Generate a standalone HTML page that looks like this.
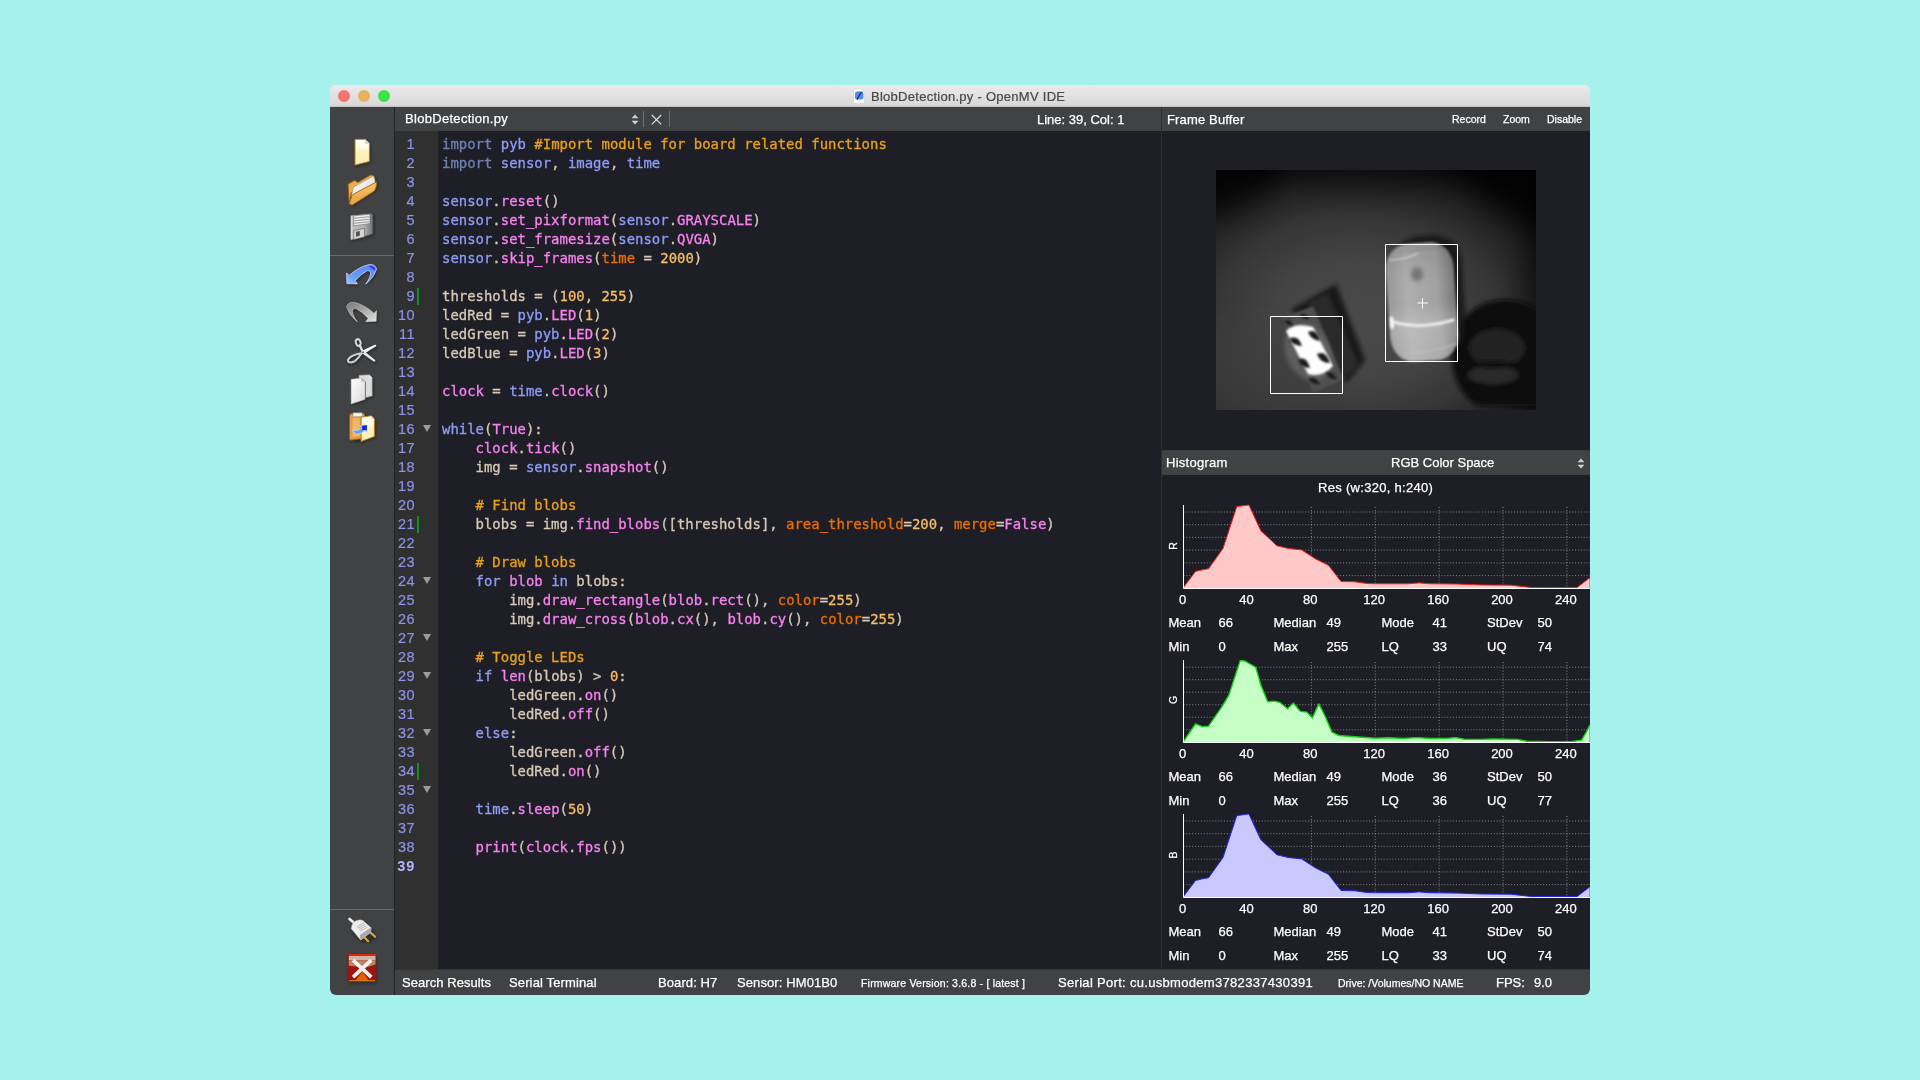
<!DOCTYPE html>
<html lang="en">
<head>
<meta charset="utf-8">
<title>BlobDetection.py - OpenMV IDE</title>
<style>
*{box-sizing:border-box;margin:0;padding:0}
html,body{width:1920px;height:1080px;overflow:hidden}
body{background:#a5f1ed;font-family:"Liberation Sans",sans-serif;position:relative}
#win{position:absolute;left:330px;top:85px;width:1260px;height:910px;border-radius:5px 5px 6px 6px;overflow:hidden;background:transparent;will-change:transform}
.abs{position:absolute}
#titlebar{left:0;top:0;width:1260px;height:22px;background:linear-gradient(#eaeaea,#e2e2e2 45%,#d7d7d7);border-bottom:1px solid #c2c2c2}
#titlebar .t{position:absolute;left:541px;top:1px;height:22px;line-height:22px;font-size:13px;color:#484848;white-space:nowrap;letter-spacing:.27px;-webkit-text-stroke:.2px #484848}
.tl{position:absolute;top:5px;width:12px;height:12px;border-radius:50%}
#sidebar{left:0;top:22px;width:64px;height:888px;background:#404244}
#sideline{left:64px;top:22px;width:1px;height:888px;background:#222324}
.sep{position:absolute;left:0;width:64px;height:1px;background:#606264}
#tabbar{left:65px;top:22px;width:766px;height:24px;background:#404244}
#gutter{left:65px;top:46px;width:43px;height:839px;background:#303030}
#editor{left:108px;top:46px;width:723px;height:839px;background:#1e1e27}
#vsplit{left:831px;top:22px;width:1px;height:863px;background:#2f2f30}
#fbhead{left:832px;top:22px;width:428px;height:24px;background:#404244}
#fbarea{left:832px;top:46px;width:428px;height:319px;background:#1e1e27}
#hhead{left:832px;top:365px;width:428px;height:25px;background:#404244;border-top:1px dotted #34353a}
#hhead .f13{top:-1px}
#harea{left:832px;top:390px;width:428px;height:495px;background:#1e1e27}
#status{left:65px;top:884px;width:1195px;height:26px;background:#404244;border-top:1px solid #34353a}
.w{color:#fff;white-space:nowrap;position:absolute;-webkit-text-stroke:.25px #fff}

#editor{font-family:"DejaVu Sans Mono","Liberation Mono",monospace;font-size:13.94px;color:#d9cab5;padding:4px 0 0 4px}
.ln{height:19px;line-height:19px;white-space:pre}
.ln i{font-style:normal}
#editor,.ln i{-webkit-text-stroke:.3px currentColor}
.k{color:#7182b4}.m{color:#8f9df7}.c{color:#eaa11b}.f{color:#f882f0}.a{color:#ee6e02}.n{color:#f6be66}
#gutter{padding-top:4px;font-size:14.5px;letter-spacing:.45px;color:#8c93e8;-webkit-text-stroke:.2px #8c93e8}
.gn{height:19px;line-height:19px;position:relative}
.gn span{position:absolute;right:23px;top:0}
.gn.cur{font-weight:bold;color:#b2b6ff;-webkit-text-stroke:0;letter-spacing:.8px}
.fold{position:absolute;left:28px;top:5px;width:0;height:0;border-left:4.7px solid transparent;border-right:4.7px solid transparent;border-top:7.6px solid #9c9c9c}
.mark{position:absolute;left:22px;top:1px;width:2px;height:17px;background:#12901a}

.f13{font-size:13px;top:0;height:24px;line-height:24px}
.f11{font-size:10.5px;top:0;height:24px;line-height:25px}
.f10{font-size:10.5px;top:0;height:25px;line-height:27px}
#status .f13{height:25px;line-height:25px;padding-top:0}

#t_file{letter-spacing:.3px;padding-top:0}#t_fb{letter-spacing:.15px}#t_hist{letter-spacing:.27px;margin-left:-1px}
#s_search{letter-spacing:.06px}#s_serial{letter-spacing:.13px}#s_board{letter-spacing:.1px}#s_sensor{letter-spacing:.1px}
#s_fw{letter-spacing:.2px}#s_port{letter-spacing:.31px}

.h13{font-size:13px;height:18px;line-height:18px}
.ax{width:40px;text-align:center}
.rot{font-size:10.5px;width:18px;height:12px;line-height:12px;text-align:center;transform:rotate(-90deg)}
#h_res{letter-spacing:.3px}
.f13{padding-top:1px}
</style>
</head>
<body>
<div id="win">
  <div id="titlebar" class="abs">
    <span class="tl" style="left:8px;background:#f4756f"></span>
    <span class="tl" style="left:28px;background:#e8b35f"></span>
    <span class="tl" style="left:48px;background:#3ae449"></span>
    <svg class="abs" style="left:522px;top:3px" width="14" height="16" viewBox="0 0 14 16">
      <path d="M1.700 .9 H9 L12.400 4.300 V15.200 H1.700 Z" fill="#fff" stroke="#c9c9c9" stroke-width=".5"/>
      <rect x="3" y="3.600" width="8.400" height="8" rx="1.800" fill="#4f8df5"/>
      <path d="M9.300 4.200 L5.200 11" stroke="#2c2c3c" stroke-width="1.300" stroke-linecap="round"/>
    </svg>
    <span class="t">BlobDetection.py - OpenMV IDE</span>
  </div>
  <div id="sidebar" class="abs">
<svg class="abs" style="left:0;top:0" width="64" height="888" viewBox="330 107 64 888">
<defs>
<linearGradient id="gPage" x1="0" y1="0" x2="0" y2="1"><stop offset="0" stop-color="#ffffff"/><stop offset=".3" stop-color="#fffbe6"/><stop offset=".45" stop-color="#fdf2bd"/><stop offset="1" stop-color="#fbeeb4"/></linearGradient>
<linearGradient id="gWhite" x1="0" y1="0" x2="1" y2="1"><stop offset="0" stop-color="#ffffff"/><stop offset="1" stop-color="#d9d9d9"/></linearGradient>
<linearGradient id="gGray" x1="0" y1="0" x2="1" y2="0"><stop offset="0" stop-color="#f0f0f0"/><stop offset=".12" stop-color="#bdbdbd"/><stop offset=".6" stop-color="#b2b2b2"/><stop offset="1" stop-color="#6f6f6f"/></linearGradient>
<linearGradient id="gFold" x1="0" y1="0" x2="0" y2="1"><stop offset="0" stop-color="#f8c468"/><stop offset="1" stop-color="#e9a443"/></linearGradient>
<linearGradient id="gUndo" x1="0" y1="1" x2="1" y2="0"><stop offset="0" stop-color="#a3c0ff"/><stop offset=".35" stop-color="#5f9bff"/><stop offset=".8" stop-color="#5a8cff"/><stop offset="1" stop-color="#3a4cf0"/></linearGradient>
<linearGradient id="gRedo" x1="1" y1="1" x2="0" y2="0"><stop offset="0" stop-color="#e6e6e6"/><stop offset=".5" stop-color="#a9a9a9"/><stop offset="1" stop-color="#777"/></linearGradient>
<filter id="ish" x="-30%" y="-30%" width="170%" height="170%"><feGaussianBlur stdDeviation="0.9"/></filter>
</defs>
<path d="M330 255.500 H394 M330 909.500 H394" stroke="#66686a" stroke-width="1"/>
<path d="M354.7 139.1 L365.2 139.1 L369.7 143.3 L369.7 161.7 L354.7 165.6 Z" fill="#1c1c1c" opacity=".55" filter="url(#ish)" transform="translate(1.2 1.4)"/>
<path d="M355.0 139.3 L365.2 139.3 L369.4 143.3 L369.4 161.4 L355.0 165.1 Z" fill="url(#gPage)" stroke="#b97d22" stroke-width="1"/>
<path d="M365.2 139.3 L365.2 143.3 L369.4 143.3 Z" fill="#d4d4d4" stroke="#c9c0a8" stroke-width=".5"/>
<path d="M347.8 183.9 L354.7 180.2 L357.8 182.2 L370.8 174.7 L374.1 175.6 L376.9 181.7 L375.8 188.9 L351.9 205.3 L349.1 203.9 Z" fill="#1c1c1c" opacity=".55" filter="url(#ish)" transform="translate(1 1.5)"/>
<path d="M348.0 184.1 L354.7 180.4 L357.8 182.4 L370.8 174.9 L373.9 175.8 L375.0 180.2 L351.3 192.8 L349.3 203.7 Z" fill="#ecaa48" stroke="#9a621a" stroke-width="1" stroke-linejoin="round"/>
<path d="M351.1 196.7 L353.8 186.9 L373.3 176.2 L374.7 179.4 L375.3 183.3 L353.0 198.0 Z" fill="url(#gWhite)" stroke="#9a9a9a" stroke-width=".5"/>
<path d="M349.3 203.7 L352.2 195.0 L357.1 192.2 L376.7 181.9 L376.1 186.9 L374.4 190.9 L352.1 205.1 Z" fill="url(#gFold)" stroke="#a86c1c" stroke-width="1" stroke-linejoin="round"/>
<path d="M359.7 198.0 L369.7 193.3" stroke="#c98d2e" stroke-width="1" stroke-dasharray="1 1.6" fill="none"/>
<path d="M350.0 215.0 L371.3 212.8 L373.3 214.4 L373.3 234.4 L351.3 240.6 L350.0 239.4 Z" fill="#1c1c1c" opacity=".55" filter="url(#ish)" transform="translate(1.2 1.4)"/>
<path d="M350.2 215.2 L371.1 213.1 L373.1 214.7 L373.1 234.2 L351.6 240.2 L350.2 239.2 Z" fill="url(#gGray)" stroke="#3c3c3c" stroke-width=".9" stroke-linejoin="round"/>
<path d="M353.6 215.8 L370.0 214.2 L370.0 223.6 L353.6 225.8 Z" fill="#ececec" stroke="#6e6e6e" stroke-width=".6"/>
<path d="M354.1 218.3 L369.6 216.7 M354.1 220.9 L369.6 219.2 M354.1 223.3 L369.6 221.7" stroke="#8f8f8f" stroke-width=".9" fill="none"/>
<path d="M353.8 230.6 L364.4 228.3 L364.4 236.9 L353.8 239.6 Z" fill="#d6d6d6" stroke="#555" stroke-width=".6"/>
<path d="M356.0 231.8 L359.8 230.9 L359.8 235.8 L356.0 236.7 Z" fill="#505050"/>
<path d="M346.6 272.9 L346.9 283.6 L357.6 283.9 L355.0 280.7 Q360.8 274.1 367.2 270.7 Q370.9 270.3 370.6 273.9 Q370.2 277.8 365.7 284.2 Q374.1 277.2 376.6 269.4 Q375.6 263.9 369.1 264.6 Q359.1 266.7 349.1 275.4 Z" fill="#1c1c1c" opacity=".6" filter="url(#ish)" transform="translate(1 1.5)"/>
<path d="M346.6 272.9 L346.9 283.6 L357.6 283.9 L355.0 280.7 Q360.8 274.1 367.2 270.7 Q370.9 270.3 370.6 273.9 Q370.2 277.8 365.7 284.2 Q374.1 277.2 376.6 269.4 Q375.6 263.9 369.1 264.6 Q359.1 266.7 349.1 275.4 Z" fill="url(#gUndo)" stroke="#cfd2ff" stroke-width=".8" stroke-linejoin="round"/>
<path d="M368.6 266.1 Q374.1 265.9 375.3 270.6 Q371.9 268.1 368.6 266.1 Z" fill="#1a1ae6" opacity=".85"/>
<path d="M376.6 310.7 L376.2 321.3 L365.6 321.7 L368.1 318.4 Q362.3 311.9 355.9 308.4 Q352.2 308.1 352.6 311.7 Q352.9 315.6 357.4 322.0 Q349.0 315.0 346.6 307.2 Q347.6 301.7 354.0 302.3 Q364.0 304.4 374.0 313.2 Z" fill="#1c1c1c" opacity=".6" filter="url(#ish)" transform="translate(1 1.5)"/>
<path d="M376.6 310.7 L376.2 321.3 L365.6 321.7 L368.1 318.4 Q362.3 311.9 355.9 308.4 Q352.2 308.1 352.6 311.7 Q352.9 315.6 357.4 322.0 Q349.0 315.0 346.6 307.2 Q347.6 301.7 354.0 302.3 Q364.0 304.4 374.0 313.2 Z" fill="url(#gRedo)" stroke="#e9e9e9" stroke-width=".4" stroke-linejoin="round"/>
<g filter="url(#ish)" opacity=".65" transform="translate(.9 1.3)" fill="#151515" stroke="#151515"><path d="M362 350.800 L375.400 344.400 L376.500 346.100 L364.200 353.700 Z" stroke="none" fill="#151515"/><path d="M361.600 353 L364.100 350.900 L375.500 360.300 L374.300 362 Z" stroke="none" fill="#151515"/><path d="M363 352.300 L359.800 345.600" fill="none" stroke="#151515" stroke-width="2.400" stroke-linecap="round"/><ellipse cx="358.200" cy="342.500" rx="2.300" ry="3.400" transform="rotate(-18 358.200 342.500)" fill="none" stroke="#151515" stroke-width="2"/><path d="M361.600 353.300 C356.500 353.800 349.500 356.300 348 360 C347.500 363 352 363 355.200 360.900 C358.100 358.700 359.900 356 361.600 353.300 Z" fill="none" stroke="#151515" stroke-width="2" stroke-linejoin="round"/></g>
<path d="M362 350.800 L375.400 344.400 L376.500 346.100 L364.200 353.700 Z" stroke="none" fill="#f2f2f2"/><path d="M361.600 353 L364.100 350.900 L375.500 360.300 L374.300 362 Z" stroke="none" fill="#e6e6e6"/><path d="M363 352.300 L359.800 345.600" fill="none" stroke="#dedede" stroke-width="2.400" stroke-linecap="round"/><ellipse cx="358.200" cy="342.500" rx="2.300" ry="3.400" transform="rotate(-18 358.200 342.500)" fill="none" stroke="#d8d8d8" stroke-width="2"/><path d="M361.600 353.300 C356.500 353.800 349.500 356.300 348 360 C347.500 363 352 363 355.200 360.900 C358.100 358.700 359.900 356 361.600 353.300 Z" fill="none" stroke="#cfcfcf" stroke-width="2" stroke-linejoin="round"/>
<circle cx="363.100" cy="352.300" r=".800" fill="#222"/>
<path d="M358.8 375.0 L369.2 374.6 L372.3 377.5 L372.3 396.2 L365.1 398.3 L365.1 399.6 L350.9 404.2 L350.9 379.2 L358.8 378.2 Z" fill="#1c1c1c" opacity=".55" filter="url(#ish)" transform="translate(1.2 1.4)"/>
<path d="M359.0 375.2 L369.2 374.8 L372.2 377.7 L372.2 396.1 L359.0 399.2 Z" fill="#dcdcdc" stroke="#8c8c8c" stroke-width=".6"/>
<path d="M369.2 374.8 L369.2 377.7 L372.2 377.7 Z" fill="#f6f6f6"/>
<path d="M365.5 381.7 L365.5 399.0" stroke="#555" stroke-width="1" fill="none" opacity=".8"/>
<path d="M351.1 379.3 L361.8 378.1 L364.9 381.2 L364.9 399.4 L351.1 403.9 Z" fill="url(#gWhite)" stroke="#b5b5b5" stroke-width=".5"/>
<path d="M361.8 378.1 L361.8 381.2 L364.9 381.2 Z" fill="#bdbdbd" stroke="#999" stroke-width=".4"/>
<path d="M349.2 415.0 L350.5 413.3 L364.2 413.3 L371.3 415.4 L374.7 418.8 L374.7 436.7 L360.9 441.7 L350.5 440.4 L349.2 439.2 Z" fill="#1c1c1c" opacity=".55" filter="url(#ish)" transform="translate(1.2 1.4)"/>
<path d="M349.5 415.2 L350.7 413.7 L364.1 413.7 L364.5 415.2 L364.5 438.2 L350.7 440.2 L349.5 439.0 Z" fill="#e59f42" stroke="#9c5d12" stroke-width="1" stroke-linejoin="round"/>
<path d="M352.6 418.3 L359.7 418.3 L359.7 435.8 L352.6 437.1 Z" fill="#f2c27a" opacity=".7"/>
<path d="M353.0 412.8 L362.2 412.8 L362.2 416.5 L353.0 416.8 Z" fill="#f4f4f4" stroke="#8d8d8d" stroke-width=".5"/>
<path d="M361.1 417.2 L371.2 415.7 L374.4 418.9 L374.4 436.5 L361.1 441.4 Z" fill="url(#gPage)" stroke="#b97d22" stroke-width="1" stroke-linejoin="round"/>
<path d="M371.2 415.7 L371.2 418.9 L374.4 418.9 Z" fill="#d8d8d8"/>
<path d="M352.0 430.0 Q357.2 431.7 361.8 428.3 L359.8 425.8 L367.2 424.8 L367.2 432.5 L364.8 430.4 Q359.7 435.8 354.7 433.3 Z" fill="#5aa2ff" stroke="#e8f0ff" stroke-width=".5"/>
<path d="M362.2 425.7 L366.8 425.2 L366.8 430.0 L362.2 430.0 Z" fill="#1c1ce0"/>
<path d="M351.3 925.0 L354.7 920.8 L362.2 919.6 L371.3 927.5 L375.5 936.7 L368.4 941.7 L360.5 940.4 L351.3 931.7 Z" fill="#1c1c1c" opacity=".55" filter="url(#ish)" transform="translate(1.2 1.6)"/>
<path d="M349.5 919.0 L353.4 922.3" stroke="#f1f1f1" stroke-width="2.6" stroke-linecap="round" fill="none"/>
<path d="M370.1 932.1 L375.1 936.7 M363.7 936.7 L368.2 941.2" stroke="#e2a13c" stroke-width="2.2" stroke-linecap="round" fill="none"/>
<path d="M351.2 928.8 Q351.3 923.3 355.9 920.7 Q360.5 918.8 363.0 920.4 L371.5 927.9 L370.1 932.9 L360.7 940.2 Z" fill="#ececec" stroke="#9d9d9d" stroke-width=".4" stroke-linejoin="round"/>
<path d="M360.7 940.2 L370.1 932.9 L371.5 927.9 L370.9 927.5 L359.8 935.0 Z" fill="#a9a9a9"/>
<path d="M356.8 926.7 L363.8 922.9 M357.8 928.2 L365.1 924.3 M359.0 929.6 L366.3 925.8 M360.1 931.0 L367.3 927.3" stroke="#a2a2a2" stroke-width=".7" fill="none"/>
<rect x="347.8" y="954" width="28.6" height="28.2" rx="1.5" fill="#1c1c1c" opacity=".5" filter="url(#ish)" transform="translate(.6 1.2)"/>
<rect x="347.8" y="954" width="28.4" height="27.8" rx="1.5" fill="#9d1310"/>
<path d="M348.8 955.7 L375.5 955.7 L375.5 960.2 L348.8 960.2 Z" fill="#cdb3a8"/>
<path d="M348.8 960.2 L375.5 960.2 L375.5 964.6 L368.0 966.7 L358.0 966.7 L348.8 965.8 Z" fill="#b98462"/>
<path d="M355.1 981.0 L362.2 971.7 L369.2 981.0 Z" fill="#e56207"/>
<path d="M348.3 954.7 L375.9 954.7" stroke="#e2240f" stroke-width="1.2" fill="none"/>
<path d="M349.2 980.7 L375.1 980.7" stroke="#d8860a" stroke-width="1" fill="none"/>
<path d="M353.0 960.2 L371.3 977.1 M371.3 960.2 L353.0 977.1" stroke="#f0f0f0" stroke-width="3.8" stroke-linecap="butt" fill="none"/>
</svg>
</div>
  <div id="sideline" class="abs"></div>
  <div id="tabbar" class="abs">
    <span class="w f13" id="t_file" style="left:10px">BlobDetection.py</span>
    <svg class="abs" style="left:235px;top:6px;overflow:visible" width="44" height="16" viewBox="0 0 44 16">
      <path d="M1.6 5.2 L5 1.6 L8.4 5.2 Z M1.6 7.8 L5 11.4 L8.4 7.8 Z" fill="#d0d0d0"/>
      <path d="M13.5 -2 V14 M39.5 -2 V14" stroke="#6e6f71" stroke-width="1"/>
      <path d="M21.8 2 L31.2 11.4 M31.2 2 L21.8 11.4" stroke="#e4e4e4" stroke-width="1.1" fill="none"/>
    </svg>
    <span class="w f13" id="t_line" style="left:642px">Line: 39, Col: 1</span>
  </div>
  <div id="gutter" class="abs">
<div class="gn"><span>1</span></div>
<div class="gn"><span>2</span></div>
<div class="gn"><span>3</span></div>
<div class="gn"><span>4</span></div>
<div class="gn"><span>5</span></div>
<div class="gn"><span>6</span></div>
<div class="gn"><span>7</span></div>
<div class="gn"><span>8</span></div>
<div class="gn"><span>9</span><b class="mark"></b></div>
<div class="gn"><span>10</span></div>
<div class="gn"><span>11</span></div>
<div class="gn"><span>12</span></div>
<div class="gn"><span>13</span></div>
<div class="gn"><span>14</span></div>
<div class="gn"><span>15</span></div>
<div class="gn"><span>16</span><b class="fold"></b></div>
<div class="gn"><span>17</span></div>
<div class="gn"><span>18</span></div>
<div class="gn"><span>19</span></div>
<div class="gn"><span>20</span></div>
<div class="gn"><span>21</span><b class="mark"></b></div>
<div class="gn"><span>22</span></div>
<div class="gn"><span>23</span></div>
<div class="gn"><span>24</span><b class="fold"></b></div>
<div class="gn"><span>25</span></div>
<div class="gn"><span>26</span></div>
<div class="gn"><span>27</span><b class="fold"></b></div>
<div class="gn"><span>28</span></div>
<div class="gn"><span>29</span><b class="fold"></b></div>
<div class="gn"><span>30</span></div>
<div class="gn"><span>31</span></div>
<div class="gn"><span>32</span><b class="fold"></b></div>
<div class="gn"><span>33</span></div>
<div class="gn"><span>34</span><b class="mark"></b></div>
<div class="gn"><span>35</span><b class="fold"></b></div>
<div class="gn"><span>36</span></div>
<div class="gn"><span>37</span></div>
<div class="gn"><span>38</span></div>
<div class="gn cur"><span>39</span></div>
</div>
  <div id="editor" class="abs">
<div class="ln"><i class="k">import</i> <i class="m">pyb</i> <i class="c">#Import module for board related functions</i></div>
<div class="ln"><i class="k">import</i> <i class="m">sensor</i>, <i class="m">image</i>, <i class="m">time</i></div>
<div class="ln"></div>
<div class="ln"><i class="m">sensor</i>.<i class="f">reset</i>()</div>
<div class="ln"><i class="m">sensor</i>.<i class="f">set_pixformat</i>(<i class="m">sensor</i>.<i class="f">GRAYSCALE</i>)</div>
<div class="ln"><i class="m">sensor</i>.<i class="f">set_framesize</i>(<i class="m">sensor</i>.<i class="f">QVGA</i>)</div>
<div class="ln"><i class="m">sensor</i>.<i class="f">skip_frames</i>(<i class="a">time</i> = <i class="n">2000</i>)</div>
<div class="ln"></div>
<div class="ln">thresholds = (<i class="n">100</i>, <i class="n">255</i>)</div>
<div class="ln">ledRed = <i class="m">pyb</i>.<i class="f">LED</i>(<i class="n">1</i>)</div>
<div class="ln">ledGreen = <i class="m">pyb</i>.<i class="f">LED</i>(<i class="n">2</i>)</div>
<div class="ln">ledBlue = <i class="m">pyb</i>.<i class="f">LED</i>(<i class="n">3</i>)</div>
<div class="ln"></div>
<div class="ln"><i class="f">clock</i> = <i class="m">time</i>.<i class="f">clock</i>()</div>
<div class="ln"></div>
<div class="ln"><i class="m">while</i>(<i class="f">True</i>):</div>
<div class="ln">    <i class="f">clock</i>.<i class="f">tick</i>()</div>
<div class="ln">    img = <i class="m">sensor</i>.<i class="f">snapshot</i>()</div>
<div class="ln"></div>
<div class="ln">    <i class="c"># Find blobs</i></div>
<div class="ln">    blobs = img.<i class="f">find_blobs</i>([thresholds], <i class="a">area_threshold</i>=<i class="n">200</i>, <i class="a">merge</i>=<i class="f">False</i>)</div>
<div class="ln"></div>
<div class="ln">    <i class="c"># Draw blobs</i></div>
<div class="ln">    <i class="m">for</i> <i class="f">blob</i> <i class="m">in</i> blobs:</div>
<div class="ln">        img.<i class="f">draw_rectangle</i>(<i class="f">blob</i>.<i class="f">rect</i>(), <i class="a">color</i>=<i class="n">255</i>)</div>
<div class="ln">        img.<i class="f">draw_cross</i>(<i class="f">blob</i>.<i class="f">cx</i>(), <i class="f">blob</i>.<i class="f">cy</i>(), <i class="a">color</i>=<i class="n">255</i>)</div>
<div class="ln"></div>
<div class="ln">    <i class="c"># Toggle LEDs</i></div>
<div class="ln">    <i class="m">if</i> <i class="f">len</i>(blobs) &gt; <i class="n">0</i>:</div>
<div class="ln">        ledGreen.<i class="f">on</i>()</div>
<div class="ln">        ledRed.<i class="f">off</i>()</div>
<div class="ln">    <i class="m">else</i>:</div>
<div class="ln">        ledGreen.<i class="f">off</i>()</div>
<div class="ln">        ledRed.<i class="f">on</i>()</div>
<div class="ln"></div>
<div class="ln">    <i class="m">time</i>.<i class="f">sleep</i>(<i class="n">50</i>)</div>
<div class="ln"></div>
<div class="ln">    <i class="f">print</i>(<i class="f">clock</i>.<i class="f">fps</i>())</div>
<div class="ln"></div>
</div>
  <div id="vsplit" class="abs"></div>
  <div id="fbhead" class="abs">
    <span class="w f13" id="t_fb" style="left:5px">Frame Buffer</span>
    <span class="w f11" id="t_rec" style="left:290px">Record</span>
    <span class="w f11" id="t_zoom" style="left:341px">Zoom</span>
    <span class="w f11" id="t_dis" style="left:385px">Disable</span>
  </div>
  <div id="fbarea" class="abs">
<svg class="abs" style="left:54px;top:39px" width="320" height="240" viewBox="0 0 320 240">
  <defs>
    <radialGradient id="bgG" gradientUnits="userSpaceOnUse" cx="0" cy="0" r="1" gradientTransform="translate(140 150) scale(240 172)">
      <stop offset="0" stop-color="#4a4a4a"/>
      <stop offset="0.35" stop-color="#444444"/>
      <stop offset="0.6" stop-color="#363636"/>
      <stop offset="0.8" stop-color="#222222"/>
      <stop offset="0.95" stop-color="#0e0e0e"/>
      <stop offset="1" stop-color="#090909"/>
    </radialGradient>
    <linearGradient id="mouseG" x1="0" y1="0" x2="1" y2="0">
      <stop offset="0" stop-color="#989898"/>
      <stop offset="0.3" stop-color="#aeaeae"/>
      <stop offset="0.75" stop-color="#a0a0a0"/>
      <stop offset="1" stop-color="#767676"/>
    </linearGradient>
    <linearGradient id="mouseV" x1="0" y1="0" x2="0" y2="1">
      <stop offset="0" stop-color="#000" stop-opacity=".12"/>
      <stop offset="0.5" stop-color="#fff" stop-opacity="0"/>
      <stop offset="0.7" stop-color="#fff" stop-opacity=".18"/>
      <stop offset="1" stop-color="#fff" stop-opacity=".1"/>
    </linearGradient>
    <filter id="b1" filterUnits="userSpaceOnUse" x="-60" y="-60" width="440" height="360"><feGaussianBlur stdDeviation="0.9"/></filter>
    <filter id="b2" filterUnits="userSpaceOnUse" x="-60" y="-60" width="440" height="360"><feGaussianBlur stdDeviation="2.2"/></filter>
    <filter id="b4" filterUnits="userSpaceOnUse" x="-200" y="-200" width="720" height="640"><feGaussianBlur stdDeviation="14"/></filter>
    <clipPath id="fbclip"><rect width="320" height="240"/></clipPath>
  </defs>
  <g clip-path="url(#fbclip)">
    <rect width="320" height="240" fill="url(#bgG)"/>
    <g filter="url(#b4)" fill="#060606">
      <ellipse cx="-10" cy="-10" rx="75" ry="55" opacity=".6"/>
      <ellipse cx="330" cy="-10" rx="80" ry="62" opacity=".62"/>
      <ellipse cx="160" cy="-32" rx="170" ry="50" opacity=".4"/>
      <ellipse cx="340" cy="120" rx="32" ry="130" opacity=".5"/>
    </g>
    <ellipse cx="10" cy="215" rx="90" ry="60" fill="#404040" opacity=".6" filter="url(#b4)"/>
    <!-- lens cap ring -->
    <g filter="url(#b2)">
      <path d="M236 178 C238 150 262 128 292 130 C312 131 326 140 330 150 L330 236 L262 236 C244 226 234 204 236 178 Z" fill="#0e0e0e"/>
      <ellipse cx="281" cy="178" rx="28" ry="19" fill="#232323"/>
      <ellipse cx="277" cy="205" rx="25" ry="9" fill="#2b2b2b"/>
      <ellipse cx="278" cy="195" rx="27" ry="3.500" fill="#0b0b0b"/>
    </g>
    <!-- mouse shadow -->
    <rect x="180" y="66" width="68" height="120" rx="26" fill="#151515" opacity=".85" transform="rotate(-4 210 130)" filter="url(#b2)"/>
    <!-- mouse body -->
    <g transform="rotate(-4 206 132)">
      <rect x="172" y="73" width="68" height="118" rx="22" ry="26" fill="url(#mouseG)" filter="url(#b1)"/>
      <rect x="172" y="73" width="68" height="118" rx="22" ry="26" fill="url(#mouseV)" filter="url(#b1)"/>
      <ellipse cx="203" cy="104" rx="6" ry="7" fill="#757575" filter="url(#b2)"/>
      <path d="M176 150 Q205 160 236 152" stroke="#f4f4f4" stroke-width="2.6" fill="none" stroke-linecap="round" filter="url(#b1)"/>
      <path d="M174.500 146 v9" stroke="#fff" stroke-width="3.5" stroke-linecap="round" filter="url(#b1)"/>
      <path d="M185 182 Q210 184 238 176" stroke="#c4c4c4" stroke-width="1.2" fill="none" filter="url(#b1)"/>
      <path d="M176 88 Q195 88 206 83" stroke="#c8c8c8" stroke-width="1.4" fill="none" filter="url(#b1)"/>
    </g>
    <!-- lego shadow + body -->
    <path d="M76 139 L120 114 L149 190 L130 213 Z" fill="#161616" opacity=".92" filter="url(#b2)"/>
    <path d="M92 132 L112 124 L143 196 L126 210 Z" fill="#2a2a2a" filter="url(#b2)"/>
    <path d="M66 148 L97 136 L128 209 L97 223 Z" fill="#505050" filter="url(#b1)"/>
    <ellipse cx="92" cy="182" rx="22" ry="30" transform="rotate(-25 92 182)" fill="#6a6a6a" opacity=".7" filter="url(#b2)"/>
    <path d="M70 161 Q79 152 97 157 L117 196 Q106 208 92 204 Z" fill="#fdfdfd" filter="url(#b1)"/>
    <g fill="#1f1f1f" filter="url(#b1)">
      <path d="M73 169 q9 -5 13 7 q-9 0 -13 -7z"/>
      <path d="M92 162 q9 -4 12 9 q-9 -1 -12 -9z"/>
      <path d="M82 190 q8 -5 12 8 q-9 0 -12 -8z"/>
      <path d="M101 184 q9 -4 13 9 q-10 0 -13 -9z"/>
      <path d="M92 209 q7 -4 12 5 q-8 1 -12 -5z"/>
      <path d="M110 203 q7 -3 11 6 q-8 1 -11 -6z"/>
      <path d="M68 151 q6 -3 9 4 q-6 1 -9 -4z"/>
      <path d="M84 145 q6 -3 9 4 q-6 1 -9 -4z"/>
    </g>
    <!-- annotations -->
    <path d="M169.500 74.500 H241.500 V191.500 H169.500 Z M54.500 146.500 H126.500 V223.500 H54.500 Z" fill="none" stroke="#fff" stroke-width="1"/>
    <path d="M201.500 133 H212 M206.500 128 V138.500" stroke="#fff" stroke-width="1" fill="none"/>
  </g>
</svg>
</div>
  <div id="hhead" class="abs">
    <span class="w f13" id="t_hist" style="left:5px">Histogram</span>
    <span class="w f13" id="t_rgb" style="left:229px">RGB Color Space</span>
    <svg class="abs" style="left:414px;top:6px" width="10" height="13" viewBox="0 0 10 13">
      <path d="M1.6 5.2 L5 1.6 L8.4 5.2 Z M1.6 7.8 L5 11.4 L8.4 7.8 Z" fill="#d0d0d0"/>
    </svg>
  </div>
  <div id="harea" class="abs">
<svg class="abs" style="left:0;top:0" width="428" height="494" viewBox="0 0 428 494">
<path d="M21.5 100.6 H428 M21.5 87.9 H428 M21.5 75.1 H428 M21.5 62.4 H428 M21.5 49.7 H428 M21.5 37.0 H428 M85.4 32.0 V113.3 M149.3 32.0 V113.3 M213.2 32.0 V113.3 M277.1 32.0 V113.3 M341.0 32.0 V113.3 M404.9 32.0 V113.3" stroke="#d0d0d0" stroke-width="0.7" stroke-dasharray="1 1.9" opacity="0.85" fill="none"/>
<path d="M20.9 113.3 L20.9 113.2 L33.5 96.5 L39.3 95.1 L46.6 93.7 L61.0 73.5 L74.8 31.6 L86.9 30.0 L98.8 55.7 L114.9 70.8 L126.3 73.5 L139.6 74.9 L153.8 84.1 L166.4 90.3 L179.0 106.5 L192.8 106.8 L205.4 108.6 L218.0 108.8 L245.5 108.8 L257.0 107.9 L268.4 108.8 L295.9 109.1 L318.8 110.0 L348.6 110.2 L369.3 112.5 L387.6 112.7 L415.1 112.5 L427.7 102.9 L427.7 113.3 Z" fill="#ffc9c9"/>
<path d="M20.9 113.2 L33.5 96.5 L39.3 95.1 L46.6 93.7 L61.0 73.5 L74.8 31.6 L86.9 30.0 L98.8 55.7 L114.9 70.8 L126.3 73.5 L139.6 74.9 L153.8 84.1 L166.4 90.3 L179.0 106.5 L192.8 106.8 L205.4 108.6 L218.0 108.8 L245.5 108.8 L257.0 107.9 L268.4 108.8 L295.9 109.1 L318.8 110.0 L348.6 110.2 L369.3 112.5 L387.6 112.7 L415.1 112.5 L427.7 102.9" fill="none" stroke="#ff1a1a" stroke-width="1.0" stroke-linejoin="round"/>
<path d="M21.5 30.0 V113.5 H428" fill="none" stroke="#fff" stroke-width="1"/>
<path d="M21.5 254.8 H428 M21.5 242.3 H428 M21.5 229.7 H428 M21.5 217.2 H428 M21.5 204.7 H428 M21.5 192.2 H428 M85.4 187.0 V267.3 M149.3 187.0 V267.3 M213.2 187.0 V267.3 M277.1 187.0 V267.3 M341.0 187.0 V267.3 M404.9 187.0 V267.3" stroke="#d0d0d0" stroke-width="0.7" stroke-dasharray="1 1.9" opacity="0.85" fill="none"/>
<path d="M20.9 267.3 L20.9 267.4 L33.5 249.0 L40.4 251.6 L46.6 251.1 L59.9 231.9 L66.8 220.4 L78.2 185.6 L82.8 186.0 L93.8 192.4 L98.8 210.1 L105.7 226.8 L112.6 226.1 L118.3 227.7 L125.6 233.7 L131.4 228.0 L138.3 236.4 L144.7 237.1 L150.4 242.9 L156.8 228.9 L163.0 241.0 L169.9 257.1 L176.8 260.5 L192.8 261.7 L213.4 263.3 L227.2 262.8 L240.9 263.5 L254.7 262.6 L268.4 263.5 L284.5 263.5 L293.6 262.6 L302.8 264.4 L318.8 264.4 L330.3 263.9 L355.5 264.4 L364.7 266.2 L387.6 266.7 L410.5 266.5 L419.7 265.1 L424.3 257.1 L427.7 250.2 L427.7 267.3 Z" fill="#c6ffc6"/>
<path d="M20.9 267.4 L33.5 249.0 L40.4 251.6 L46.6 251.1 L59.9 231.9 L66.8 220.4 L78.2 185.6 L82.8 186.0 L93.8 192.4 L98.8 210.1 L105.7 226.8 L112.6 226.1 L118.3 227.7 L125.6 233.7 L131.4 228.0 L138.3 236.4 L144.7 237.1 L150.4 242.9 L156.8 228.9 L163.0 241.0 L169.9 257.1 L176.8 260.5 L192.8 261.7 L213.4 263.3 L227.2 262.8 L240.9 263.5 L254.7 262.6 L268.4 263.5 L284.5 263.5 L293.6 262.6 L302.8 264.4 L318.8 264.4 L330.3 263.9 L355.5 264.4 L364.7 266.2 L387.6 266.7 L410.5 266.5 L419.7 265.1 L424.3 257.1 L427.7 250.2" fill="none" stroke="#14d214" stroke-width="1.4" stroke-linejoin="round"/>
<path d="M21.5 185.0 V267.5 H428" fill="none" stroke="#fff" stroke-width="1"/>
<path d="M21.5 409.6 H428 M21.5 396.9 H428 M21.5 384.1 H428 M21.5 371.4 H428 M21.5 358.7 H428 M21.5 346.0 H428 M85.4 341.0 V422.3 M149.3 341.0 V422.3 M213.2 341.0 V422.3 M277.1 341.0 V422.3 M341.0 341.0 V422.3 M404.9 341.0 V422.3" stroke="#d0d0d0" stroke-width="0.7" stroke-dasharray="1 1.9" opacity="0.85" fill="none"/>
<path d="M20.9 422.3 L20.9 422.2 L33.5 405.5 L39.3 404.1 L46.6 402.7 L61.0 382.5 L74.8 340.6 L86.9 339.0 L98.8 364.7 L114.9 379.8 L126.3 382.5 L139.6 383.9 L153.8 393.1 L166.4 399.3 L179.0 415.5 L192.8 415.8 L205.4 417.6 L218.0 417.8 L245.5 417.8 L257.0 416.9 L268.4 417.8 L295.9 418.1 L318.8 419.0 L348.6 419.2 L369.3 421.5 L387.6 421.7 L415.1 421.5 L427.7 411.9 L427.7 422.3 Z" fill="#c9c9ff"/>
<path d="M20.9 422.2 L33.5 405.5 L39.3 404.1 L46.6 402.7 L61.0 382.5 L74.8 340.6 L86.9 339.0 L98.8 364.7 L114.9 379.8 L126.3 382.5 L139.6 383.9 L153.8 393.1 L166.4 399.3 L179.0 415.5 L192.8 415.8 L205.4 417.6 L218.0 417.8 L245.5 417.8 L257.0 416.9 L268.4 417.8 L295.9 418.1 L318.8 419.0 L348.6 419.2 L369.3 421.5 L387.6 421.7 L415.1 421.5 L427.7 411.9" fill="none" stroke="#2222ff" stroke-width="1.0" stroke-linejoin="round"/>
<path d="M21.5 339.0 V422.5 H428" fill="none" stroke="#fff" stroke-width="1"/>
</svg>
<span class="w h13" id="h_res" style="left:156px;top:4px">Res (w:320, h:240)</span>
<span class="w rot" style="left:1.5px;top:65px">R</span>
<span class="w h13 ax" style="left:0.5px;top:116px">0</span>
<span class="w h13 ax" style="left:64.4px;top:116px">40</span>
<span class="w h13 ax" style="left:128.3px;top:116px">80</span>
<span class="w h13 ax" style="left:192.2px;top:116px">120</span>
<span class="w h13 ax" style="left:256.1px;top:116px">160</span>
<span class="w h13 ax" style="left:320.0px;top:116px">200</span>
<span class="w h13 ax" style="left:383.9px;top:116px">240</span>
<span class="w h13" style="left:6.5px;top:139px">Mean</span>
<span class="w h13" style="left:56.5px;top:139px">66</span>
<span class="w h13" style="left:111.5px;top:139px">Median</span>
<span class="w h13" style="left:164.5px;top:139px">49</span>
<span class="w h13" style="left:219.5px;top:139px">Mode</span>
<span class="w h13" style="left:270.5px;top:139px">41</span>
<span class="w h13" style="left:325.0px;top:139px">StDev</span>
<span class="w h13" style="left:375.5px;top:139px">50</span>
<span class="w h13" style="left:6.5px;top:163px">Min</span>
<span class="w h13" style="left:56.5px;top:163px">0</span>
<span class="w h13" style="left:111.5px;top:163px">Max</span>
<span class="w h13" style="left:164.5px;top:163px">255</span>
<span class="w h13" style="left:219.5px;top:163px">LQ</span>
<span class="w h13" style="left:270.5px;top:163px">33</span>
<span class="w h13" style="left:325.0px;top:163px">UQ</span>
<span class="w h13" style="left:375.5px;top:163px">74</span>
<span class="w rot" style="left:1.5px;top:219px">G</span>
<span class="w h13 ax" style="left:0.5px;top:270px">0</span>
<span class="w h13 ax" style="left:64.4px;top:270px">40</span>
<span class="w h13 ax" style="left:128.3px;top:270px">80</span>
<span class="w h13 ax" style="left:192.2px;top:270px">120</span>
<span class="w h13 ax" style="left:256.1px;top:270px">160</span>
<span class="w h13 ax" style="left:320.0px;top:270px">200</span>
<span class="w h13 ax" style="left:383.9px;top:270px">240</span>
<span class="w h13" style="left:6.5px;top:293px">Mean</span>
<span class="w h13" style="left:56.5px;top:293px">66</span>
<span class="w h13" style="left:111.5px;top:293px">Median</span>
<span class="w h13" style="left:164.5px;top:293px">49</span>
<span class="w h13" style="left:219.5px;top:293px">Mode</span>
<span class="w h13" style="left:270.5px;top:293px">36</span>
<span class="w h13" style="left:325.0px;top:293px">StDev</span>
<span class="w h13" style="left:375.5px;top:293px">50</span>
<span class="w h13" style="left:6.5px;top:317px">Min</span>
<span class="w h13" style="left:56.5px;top:317px">0</span>
<span class="w h13" style="left:111.5px;top:317px">Max</span>
<span class="w h13" style="left:164.5px;top:317px">255</span>
<span class="w h13" style="left:219.5px;top:317px">LQ</span>
<span class="w h13" style="left:270.5px;top:317px">36</span>
<span class="w h13" style="left:325.0px;top:317px">UQ</span>
<span class="w h13" style="left:375.5px;top:317px">77</span>
<span class="w rot" style="left:1.5px;top:374px">B</span>
<span class="w h13 ax" style="left:0.5px;top:425px">0</span>
<span class="w h13 ax" style="left:64.4px;top:425px">40</span>
<span class="w h13 ax" style="left:128.3px;top:425px">80</span>
<span class="w h13 ax" style="left:192.2px;top:425px">120</span>
<span class="w h13 ax" style="left:256.1px;top:425px">160</span>
<span class="w h13 ax" style="left:320.0px;top:425px">200</span>
<span class="w h13 ax" style="left:383.9px;top:425px">240</span>
<span class="w h13" style="left:6.5px;top:448px">Mean</span>
<span class="w h13" style="left:56.5px;top:448px">66</span>
<span class="w h13" style="left:111.5px;top:448px">Median</span>
<span class="w h13" style="left:164.5px;top:448px">49</span>
<span class="w h13" style="left:219.5px;top:448px">Mode</span>
<span class="w h13" style="left:270.5px;top:448px">41</span>
<span class="w h13" style="left:325.0px;top:448px">StDev</span>
<span class="w h13" style="left:375.5px;top:448px">50</span>
<span class="w h13" style="left:6.5px;top:472px">Min</span>
<span class="w h13" style="left:56.5px;top:472px">0</span>
<span class="w h13" style="left:111.5px;top:472px">Max</span>
<span class="w h13" style="left:164.5px;top:472px">255</span>
<span class="w h13" style="left:219.5px;top:472px">LQ</span>
<span class="w h13" style="left:270.5px;top:472px">33</span>
<span class="w h13" style="left:325.0px;top:472px">UQ</span>
<span class="w h13" style="left:375.5px;top:472px">74</span>
</div>
  <div id="status" class="abs">
    <span class="w f13" id="s_search" style="left:7px">Search Results</span>
    <span class="w f13" id="s_serial" style="left:114px">Serial Terminal</span>
    <span class="w f13" id="s_board" style="left:263px">Board: H7</span>
    <span class="w f13" id="s_sensor" style="left:342px">Sensor: HM01B0</span>
    <span class="w f10" id="s_fw" style="left:466px">Firmware Version: 3.6.8 - [ latest ]</span>
    <span class="w f13" id="s_port" style="left:663px">Serial Port: cu.usbmodem3782337430391</span>
    <span class="w f10" id="s_drive" style="left:943px">Drive: /Volumes/NO NAME</span>
    <span class="w f13" id="s_fps" style="left:1101px">FPS:</span>
    <span class="w f13" id="s_fpsv" style="left:1139px">9.0</span>
  </div>
</div>
</body>
</html>
